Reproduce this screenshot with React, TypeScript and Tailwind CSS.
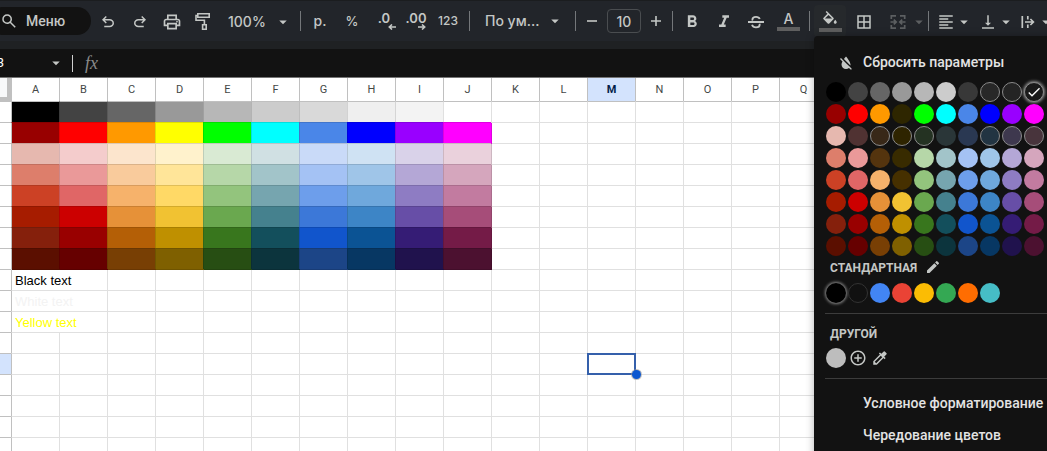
import React from 'react';
import clsx from 'clsx';
import {
  MdAddCircleOutline,
  MdArrowDropDown,
  MdBorderAll,
  MdCheck,
  MdColorize,
  MdEdit,
  MdFormatAlignLeft,
  MdFormatBold,
  MdFormatColorFill,
  MdFormatColorReset,
  MdFormatItalic,
  MdVerticalAlignBottom,
} from 'react-icons/md';

const COLUMNS = 'ABCDEFGHIJKLMNOPQRSTUVWXYZ'.split('');
const ROWS = Array.from({ length: 30 }, (_, i) => i + 1);
const ACTIVE = { column: 'M', row: 13 };

const FILLS = [
  ['text-[#000000]', 'text-[#434343]', 'text-[#666666]', 'text-[#999999]', 'text-[#b7b7b7]', 'text-[#cccccc]', 'text-[#d9d9d9]', 'text-[#efefef]', 'text-[#f3f3f3]', 'text-[#ffffff]'],
  ['text-[#980000]', 'text-[#ff0000]', 'text-[#ff9900]', 'text-[#ffff00]', 'text-[#00ff00]', 'text-[#00ffff]', 'text-[#4a86e8]', 'text-[#0000ff]', 'text-[#9900ff]', 'text-[#ff00ff]'],
  ['text-[#e6b8af]', 'text-[#f4cccc]', 'text-[#fce5cd]', 'text-[#fff2cc]', 'text-[#d9ead3]', 'text-[#d0e0e3]', 'text-[#c9daf8]', 'text-[#cfe2f3]', 'text-[#d9d2e9]', 'text-[#ead1dc]'],
  ['text-[#dd7e6b]', 'text-[#ea9999]', 'text-[#f9cb9c]', 'text-[#ffe599]', 'text-[#b6d7a8]', 'text-[#a2c4c9]', 'text-[#a4c2f4]', 'text-[#9fc5e8]', 'text-[#b4a7d6]', 'text-[#d5a6bd]'],
  ['text-[#cc4125]', 'text-[#e06666]', 'text-[#f6b26b]', 'text-[#ffd966]', 'text-[#93c47d]', 'text-[#76a5af]', 'text-[#6d9eeb]', 'text-[#6fa8dc]', 'text-[#8e7cc3]', 'text-[#c27ba0]'],
  ['text-[#a61c00]', 'text-[#cc0000]', 'text-[#e69138]', 'text-[#f1c232]', 'text-[#6aa84f]', 'text-[#45818e]', 'text-[#3c78d8]', 'text-[#3d85c6]', 'text-[#674ea7]', 'text-[#a64d79]'],
  ['text-[#85200c]', 'text-[#990000]', 'text-[#b45f06]', 'text-[#bf9000]', 'text-[#38761d]', 'text-[#134f5c]', 'text-[#1155cc]', 'text-[#0b5394]', 'text-[#351c75]', 'text-[#741b47]'],
  ['text-[#5b0f00]', 'text-[#660000]', 'text-[#783f04]', 'text-[#7f6000]', 'text-[#274e13]', 'text-[#0c343d]', 'text-[#1c4587]', 'text-[#073763]', 'text-[#20124d]', 'text-[#4c1130]'],
];

// swatches that differ from the sheet fills in dark mode, keyed by "row-column"
const DARK_SWATCHES: Record<string, string> = {
  '0-6': 'text-[#383838]',
  '0-7': 'text-[#282828] border border-[#8a8a8a]',
  '0-8': 'text-[#242424] border border-[#8a8a8a]',
  '0-9': 'text-[#1a1a1a] border border-[#8a8a8a] shadow-[0_0_3px_1px_#8a8a8a]',
  '1-3': 'text-[#2e2600]',
  '2-1': 'text-[#503232]',
  '2-2': 'text-[#382818] border border-[#8a8a8a]',
  '2-3': 'text-[#2e2400] border border-[#8a8a8a]',
  '2-4': 'text-[#243222] border border-[#8a8a8a]',
  '2-5': 'text-[#2a3638]',
  '2-6': 'text-[#2a3852]',
  '2-7': 'text-[#223442] border border-[#8a8a8a]',
  '2-8': 'text-[#3e384e] border border-[#8a8a8a]',
  '2-9': 'text-[#48343c] border border-[#8a8a8a]',
  '3-2': 'text-[#54340e]',
  '3-3': 'text-[#382b00]',
  '4-3': 'text-[#463000]',
};

const STANDARD = [
  'text-[#000000] shadow-[0_0_3px_1px_#8a8a8a]',
  'text-[#111111] border border-[#333333]',
  'text-[#4285f4]',
  'text-[#ea4335]',
  'text-[#fbbc04]',
  'text-[#34a853]',
  'text-[#ff6d01]',
  'text-[#46bdc6]',
];

const NOTES: Record<number, { text: string; color: string }> = {
  9: { text: 'Black text', color: 'text-black' },
  10: { text: 'White text', color: 'text-[#f3f3f3]' },
  11: { text: 'Yellow text', color: 'text-[#ffff00]' },
};

const SymbolIcon = ({ d, className }: { d: string; className: string }) => (
  <svg viewBox="0 -960 960 960" fill="currentColor" className={className}>
    <path d={d} />
  </svg>
);

const RollerIcon = () => (
  <svg viewBox="0 0 20 20" fill="none" stroke="currentColor" strokeWidth="1.6" className="size-5">
    <path d="M3.8 1.8H15.2V5.2H3.8ZM3.8 3.5H2V8.2H10.4V12.6M8.6 12.8H12.2V17.2H8.6Z" />
  </svg>
);

const MergeIcon = () => (
  <svg viewBox="0 0 18 18" fill="none" stroke="currentColor" strokeWidth="1.7" className="size-[18px] shrink-0">
    <path d="M7 2.8H2.3V6M2.3 12V15.2H7M11 2.8H15.7V6M15.7 12V15.2H11M1.5 9H6.5M16.5 9H11.5M4.8 6.6 7.2 9 4.8 11.4M13.2 6.6 10.8 9 13.2 11.4" />
  </svg>
);

const OverflowIcon = () => (
  <svg viewBox="0 0 18 18" fill="none" stroke="currentColor" strokeWidth="1.7" className="size-[18px] shrink-0">
    <path d="M3.3 3V15M8.8 3V6.5M8.8 11.5V15M6 9H14.2M11.4 6 14.4 9 11.4 12" />
  </svg>
);

const StrikeIcon = () => (
  <svg viewBox="0 0 18 18" fill="none" stroke="currentColor" strokeWidth="1.8" className="size-[18px]">
    <path d="M1 9H17M12.8 6C12.2 4.5 11 3.8 9 3.8C6.8 3.8 5.4 4.8 5.4 6.4C5.4 6.8 5.5 7.1 5.7 7.4M5 11.8C5.6 13.5 7 14.4 9 14.4C11.3 14.4 12.7 13.3 12.7 11.8C12.7 11.5 12.6 11.1 12.5 10.8" />
  </svg>
);

const DecimalArrow = ({ className }: { className?: string }) => (
  <svg viewBox="0 0 8 6" fill="none" stroke="currentColor" strokeWidth="1.6" className={clsx('h-[6px] w-2', className)}>
    <path d="M8 3H1.5M4 0.5 1.3 3 4 5.5" />
  </svg>
);

const Separator = ({ className }: { className: string }) => (
  <div className={clsx('h-5 w-px shrink-0 bg-[#74777a]', className)} />
);

const ToolButton = ({ label, className, children }: { label: string; className?: string; children: React.ReactNode }) => (
  <button type="button" aria-label={label} className={clsx('flex h-8 shrink-0 items-center justify-center', className ?? 'w-8')}>
    {children}
  </button>
);

const Swatch = ({ className, children }: { className: string; children?: React.ReactNode }) => (
  <button type="button" aria-label="Цвет" className={clsx('flex size-5 items-center justify-center rounded-full bg-current', className)}>
    {children}
  </button>
);

const ColorMenu = () => (
  <div className="absolute top-full left-0 z-10 -mt-px w-[260px] rounded-tl-sm bg-[#121212] pt-3 pb-8 font-[Roboto,sans-serif] shadow-[0_0_8px_rgba(0,0,0,0.3)]">
    <button type="button" className="flex h-7 items-center gap-2 pl-[23px] text-sm whitespace-nowrap text-[#e3e3e3]">
      <MdFormatColorReset className="mt-0.5 size-[18px] text-[#c4c7c5]" />
      Сбросить параметры
    </button>
    <div className="mt-1.5 ml-3 grid w-max grid-cols-10 gap-0.5">
      {FILLS.map((row, r) =>
        row.map((fill, c) => (
          <Swatch key={`${r}-${c}`} className={DARK_SWATCHES[`${r}-${c}`] ?? fill}>
            {r === 0 && c === 9 && <MdCheck className="size-4 shrink-0 text-white" />}
          </Swatch>
        ))
      )}
    </div>
    <div className="flex h-6 items-center gap-2 pl-4 text-[#c4c7c5]">
      <h3 className="text-xs font-bold">СТАНДАРТНАЯ</h3>
      <button type="button" aria-label="Изменить" className="-mt-0.5">
        <MdEdit className="size-4" />
      </button>
    </div>
    <div className="mt-[3px] ml-3 flex gap-0.5">
      {STANDARD.map((color) => (
        <Swatch key={color} className={color} />
      ))}
    </div>
    <hr className="mt-2.5 ml-[11px] border-[#3c3c3c]" />
    <h3 className="mt-3 pl-4 text-xs font-bold text-[#c4c7c5]">ДРУГОЙ</h3>
    <div className="mt-1.5 ml-3 flex items-center gap-0.5 text-[#c4c7c5]">
      <Swatch className="text-[#bdbdbd]" />
      <button type="button" aria-label="Добавить цвет" className="flex size-5 items-center justify-center">
        <MdAddCircleOutline className="size-[18px] shrink-0" />
      </button>
      <button type="button" aria-label="Пипетка" className="flex size-5 items-center justify-center">
        <MdColorize className="size-[18px] shrink-0" />
      </button>
    </div>
    <hr className="mt-2.5 ml-[11px] border-[#3c3c3c]" />
    <div className="mt-2 flex flex-col text-sm text-[#e3e3e3]">
      <button type="button" className="h-8 pl-[49px] text-left whitespace-nowrap">Условное форматирование</button>
      <button type="button" className="h-8 pl-[49px] text-left whitespace-nowrap">Чередование цветов</button>
    </div>
  </div>
);

const Toolbar = () => (
  <div className="flex h-[41px] items-center border-t border-[#1b1d1f] bg-[#22252a] font-[Inter,sans-serif] text-sm font-medium text-[#c4c7c5]">
    <button type="button" className="-ml-3 mr-px flex h-7 w-[103px] shrink-0 items-center gap-2 rounded-full bg-[#121212] pl-3 font-[Roboto,sans-serif]">
      <SymbolIcon className="size-[18px]" d="M784-120 532-372q-30 24-69 38t-83 14q-109 0-184.5-75.5T120-580q0-109 75.5-184.5T380-840q109 0 184.5 75.5T640-580q0 44-14 83t-38 69l252 252-56 56ZM380-400q75 0 127.5-52.5T560-580q0-75-52.5-127.5T380-760q-75 0-127.5 52.5T200-580q0 75 52.5 127.5T380-400Z" />
      Меню
    </button>
    <ToolButton label="Отменить" className="w-8 pt-0.5">
      <SymbolIcon className="size-[18px]" d="M280-200v-80h284q63 0 109.5-40T720-420q0-60-46.5-100T564-560H312l104 104-56 56-200-200 200-200 56 56-104 104h252q97 0 166.5 63T800-420q0 94-69.5 157T564-200H280Z" />
    </ToolButton>
    <ToolButton label="Повторить" className="w-8 pt-0.5">
      <SymbolIcon className="size-[18px]" d="M396-200q-97 0-166.5-63T160-420q0-94 69.5-157T396-640h252L544-744l56-56 200 200-200 200-56-56 104-104H396q-63 0-109.5 40T240-420q0 60 46.5 100T396-280h284v80H396Z" />
    </ToolButton>
    <ToolButton label="Печать" className="w-8 pt-0.5">
      <SymbolIcon className="size-5" d="M640-640v-120H320v120h-80v-200h480v200h-80Zm80 180q17 0 28.5-11.5T760-500q0-17-11.5-28.5T720-540q-17 0-28.5 11.5T680-500q0 17 11.5 28.5T720-460Zm-80 260v-160H320v160h320Zm80 80H240v-160H80v-240q0-51 35-85.5t85-34.5h560q51 0 85.5 34.5T880-520v240H720v160Zm80-240v-160q0-17-11.5-28.5T760-560H200q-17 0-28.5 11.5T160-520v160h80v-80h480v80h80Z" />
    </ToolButton>
    <ToolButton label="Копировать форматирование" className="w-8 pt-0.5">
      <RollerIcon />
    </ToolButton>
    <button type="button" className="flex h-8 w-20 shrink-0 items-center justify-between pt-0.5 pr-2 pl-2">
      100%
      <MdArrowDropDown className="size-[18px]" />
    </button>
    <Separator className="mr-[3px]" />
    <ToolButton label="Денежный формат">р.</ToolButton>
    <ToolButton label="Процентный формат">
      <span className="text-[13px]">%</span>
    </ToolButton>
    <ToolButton label="Уменьшить число знаков">
      <span className="flex flex-col">
        <span className="text-[13px] leading-3 font-semibold">.0</span>
        <DecimalArrow className="-mr-1.5 self-end" />
      </span>
    </ToolButton>
    <ToolButton label="Увеличить число знаков">
      <span className="flex flex-col">
        <span className="text-[13px] leading-3 font-semibold">.00</span>
        <DecimalArrow className="rotate-180 self-end" />
      </span>
    </ToolButton>
    <ToolButton label="Другие форматы">
      <span className="text-xs">123</span>
    </ToolButton>
    <Separator className="mx-[5px]" />
    <button type="button" className="flex h-8 w-[95px] shrink-0 items-center justify-between pr-1.5 pl-2.5">
      По ум...
      <MdArrowDropDown className="size-[18px]" />
    </button>
    <Separator className="mr-1 ml-[5px]" />
    <ToolButton label="Уменьшить размер шрифта" className="w-6">
      <svg viewBox="0 0 10 10" stroke="currentColor" strokeWidth="1.6" className="size-2.5">
        <path d="M0 5H10" />
      </svg>
    </ToolButton>
    <input aria-label="Размер шрифта" defaultValue="10" className="mx-[3px] h-6 w-[34px] shrink-0 rounded border border-[#4a4d50] text-center" />
    <ToolButton label="Увеличить размер шрифта" className="w-6">
      <svg viewBox="0 0 10 10" stroke="currentColor" strokeWidth="1.6" className="size-2.5">
        <path d="M0 5H10M5 0V10" />
      </svg>
    </ToolButton>
    <Separator className="mr-[3px] ml-1" />
    <ToolButton label="Полужирный" className="w-8 pt-0.5">
      <MdFormatBold className="size-5" />
    </ToolButton>
    <ToolButton label="Курсив" className="w-8 pt-0.5">
      <MdFormatItalic className="size-5" />
    </ToolButton>
    <ToolButton label="Зачеркнутый" className="w-8 pt-0.5">
      <StrikeIcon />
    </ToolButton>
    <ToolButton label="Цвет текста" className="w-8 pl-px">
      <span className="flex w-[23px] flex-col items-center">
        <span className="leading-4">A</span>
        <span className="h-1 w-full bg-[#5f5f5f]" />
      </span>
    </ToolButton>
    <Separator className="mr-1 ml-[5px]" />
    <div className="relative flex shrink-0 rounded bg-[#26292c]">
      <ToolButton label="Цвет заливки">
        <span className="flex w-[23px] flex-col items-center">
          <MdFormatColorFill className="h-[17px] w-[18px] pb-0.5" viewBox="0 0 24 20" />
          <span className="h-1 w-full bg-[#5f5f5f]" />
        </span>
      </ToolButton>
      <ColorMenu />
    </div>
    <ToolButton label="Границы" className="ml-0.5 w-8 pt-0.5">
      <MdBorderAll className="size-[18px]" />
    </ToolButton>
    <ToolButton label="Объединить ячейки" className="w-12 gap-[3px] pt-0.5 pl-2 text-[#5c5f61]">
      <MergeIcon />
      <MdArrowDropDown className="size-[18px] shrink-0" />
    </ToolButton>
    <Separator className="mr-2.5" />
    <ToolButton label="Горизонтальное выравнивание" className="w-8 pt-0.5">
      <MdFormatAlignLeft className="size-[18px] shrink-0" />
      <MdArrowDropDown className="size-[18px] shrink-0" />
    </ToolButton>
    <ToolButton label="Вертикальное выравнивание" className="ml-2.5 w-8 pt-0.5">
      <MdVerticalAlignBottom className="size-[18px] shrink-0" />
      <MdArrowDropDown className="size-[18px] shrink-0" />
    </ToolButton>
    <ToolButton label="Перенос текста" className="ml-2 w-8 pt-0.5">
      <OverflowIcon />
      <MdArrowDropDown className="size-[18px] shrink-0" />
    </ToolButton>
  </div>
);

const FormulaBar = () => (
  <div className="flex h-[29px] items-center overflow-hidden border-b border-[#757575] bg-[#121212] text-[#c4c7c5]">
    <input aria-label="Имя диапазона" defaultValue="M13" className="-ml-[22px] w-[69px] shrink-0 font-[Roboto,sans-serif] text-[13px] text-white" />
    <MdArrowDropDown className="size-[18px] shrink-0" />
    <div className="mr-3 ml-[7px] h-[17px] w-px shrink-0 bg-[#d0d0d0]" />
    <label htmlFor="formula" className="font-['Liberation_Serif',serif] text-lg leading-5 text-[#8a8a8a] italic">
      fx
    </label>
    <input id="formula" className="ml-2 min-w-0 flex-1 bg-transparent" />
  </div>
);

const Sheet = () => (
  <div className="min-h-0 flex-1 overflow-hidden bg-white">
    <table className="w-[1259px] table-fixed border-separate border-spacing-0 font-['Liberation_Sans',Arial,sans-serif]">
      <thead>
        <tr className="h-[23px] font-[Roboto,sans-serif] text-[11px] text-[#444746]">
          <th className="w-[11px] border-r-4 border-b-4 border-[#c0c0c0] bg-[#f8f9fa] p-0" />
          {COLUMNS.map((name) => (
            <th
              key={name}
              className={clsx(
                'w-12 border-l border-[#c0c0c0] p-0 pt-px',
                name === ACTIVE.column ? 'bg-[#d3e3fd] font-bold text-[#041e49]' : 'font-normal'
              )}
            >
              {name}
            </th>
          ))}
        </tr>
      </thead>
      <tbody>
        {ROWS.map((row) => (
          <tr key={row} className="h-[21px]">
            <th className={clsx('border-t border-[#c0c0c0] p-0', row === ACTIVE.row && 'bg-[#d3e3fd]')} />
            {COLUMNS.map((name, c) => {
              const note = NOTES[row];
              if (note && c === 1) return null;
              const fill = FILLS[row - 1]?.[c];
              const active = name === ACTIVE.column && row === ACTIVE.row;
              return (
                <td
                  key={name}
                  colSpan={note && c === 0 ? 2 : 1}
                  className={clsx(
                    'border-t border-l p-0',
                    row === 1 ? 'border-t-[#c0c0c0]' : 'border-t-black/12',
                    c === 0 ? 'border-l-[#c0c0c0]' : 'border-l-black/12',
                    fill && 'bg-current shadow-[1px_1px_0_currentColor]',
                    fill,
                    active && 'relative'
                  )}
                >
                  {note && c === 0 && (
                    <span className={clsx('block pt-0.5 pl-[3px] text-[13px] leading-[18px]', note.color)}>{note.text}</span>
                  )}
                  {active && (
                    <div className="absolute -top-px -left-px h-[22px] w-[49px] border-2 border-[#3560ab]">
                      <span className="absolute -right-[7px] -bottom-1.5 size-[9px] rounded-full bg-[#0b57d0] ring-1 ring-[#9a9a9a]/60" />
                    </div>
                  )}
                </td>
              );
            })}
          </tr>
        ))}
      </tbody>
    </table>
  </div>
);

const App: React.FC = () => {
  return (
    <div className="flex h-screen flex-col overflow-hidden">
      <Toolbar />
      <div className="h-2 shrink-0 bg-[#1f2123]" />
      <FormulaBar />
      <Sheet />
    </div>
  );
};

export default App;
